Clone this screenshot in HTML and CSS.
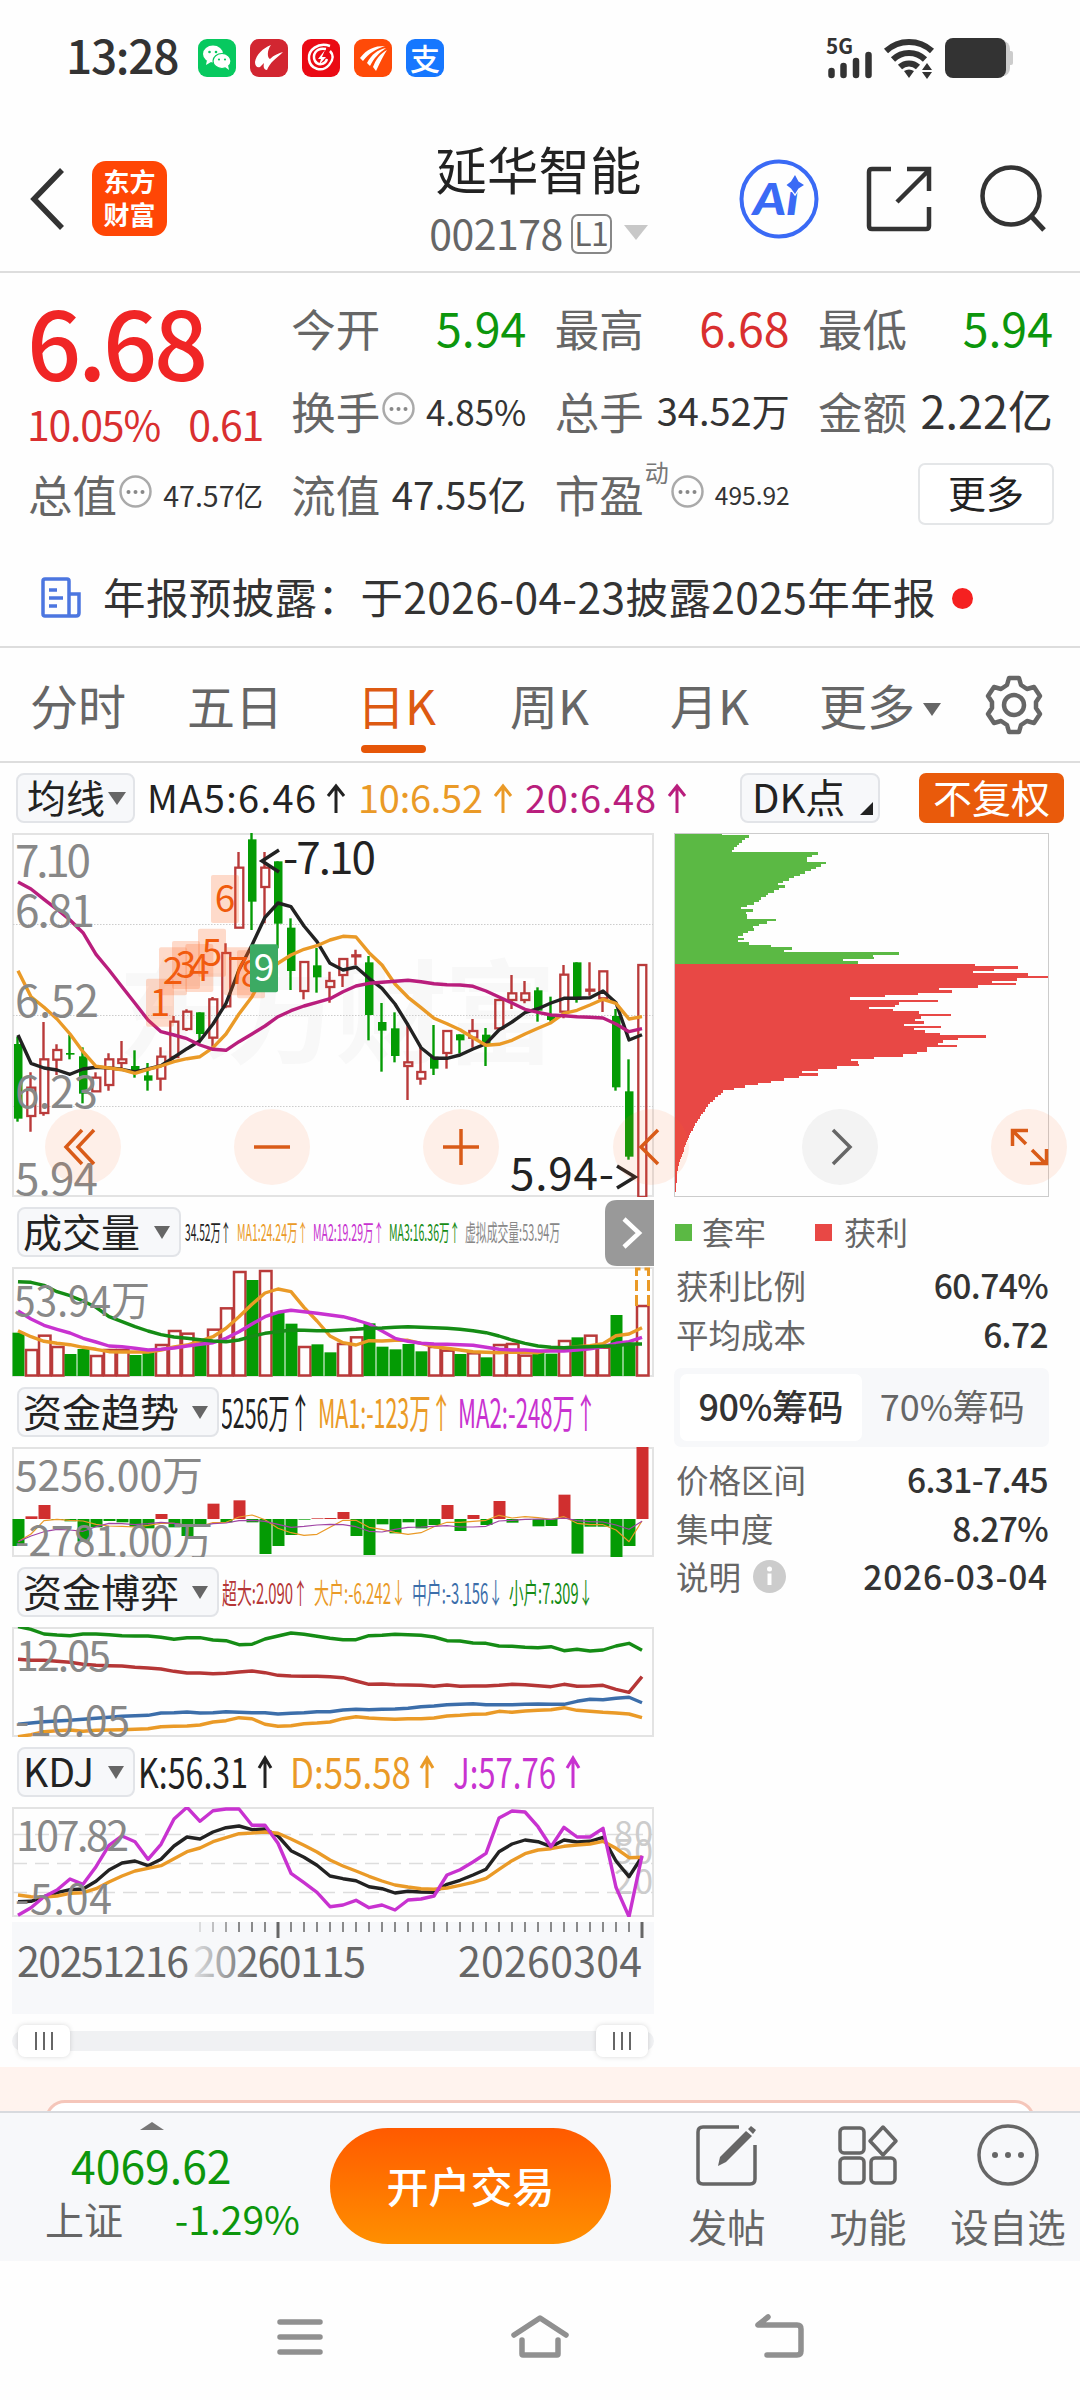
FILE: index.html
```html
<!DOCTYPE html>
<html lang="zh-CN">
<head>
    <meta charset="UTF-8">
    <meta name="viewport" content="width=device-width, initial-scale=1.0">
    <title>延华智能 002178</title>
    <link rel="stylesheet" href="styles.css">
</head>
<body>
    <svg class="defs" width="0" height="0">
        <symbol id="dots" viewBox="0 0 33 33"><circle cx="16.500" cy="16.500" r="15" fill="none" stroke="#aaa" stroke-width="2.500"/><g fill="#888"><circle cx="9.500" cy="17" r="2"/><circle cx="16.500" cy="17" r="2"/><circle cx="23.500" cy="17" r="2"/></g></symbol>
    </svg>

    <!-- Status bar -->
    <div class="status-bar">
        <span class="time">13:28</span>
        <div class="app-icons">
            <svg class="app-icon wechat" viewBox="0 0 38 38"><ellipse cx="15" cy="15" rx="10" ry="8.5" fill="#fff"/><path d="M9 21l-1 5 5-3z" fill="#fff"/><ellipse cx="24" cy="22" rx="9" ry="7.5" fill="#fff" stroke="#07c95f" stroke-width="1.2"/><path d="M27 28l4 3-1-5z" fill="#fff"/><g fill="#07c95f"><circle cx="11.5" cy="13" r="1.3"/><circle cx="18" cy="13" r="1.3"/><circle cx="21" cy="20.5" r="1.1"/><circle cx="27" cy="20.5" r="1.1"/></g></svg>
            <svg class="app-icon crimson" viewBox="0 0 38 38"><path d="M21 6C13 9 6 16 5 23C5 27 7 29 10 28L14 24C13 28 14 31 17 31C20 23 27 19 33 13C29 14 24 16 20 20C17 19 17 11 21 6Z" fill="#fff"/></svg>
            <svg class="app-icon red" viewBox="0 0 38 38"><g fill="none" stroke="#fff" stroke-width="2.500"><path d="M28 7C16 3 6 11 7 20C8 30 20 34 27 26C32 20 31 15 28 12"/><path d="M24 10C14 8 10 16 13 22C16 27 23 26 25 20"/></g><path d="M23 11L16 20L19 20L17 26L24 18L20 18Z" fill="#fff"/></svg>
            <svg class="app-icon orange" viewBox="0 0 38 38"><g fill="#fff"><path d="M6 19C13 10 20 7 31 7C22 10 15 14 9 22Z"/><path d="M13 24C18 15 23 11 32 9C25 14 20 19 16 27Z"/><path d="M19 28C22 20 26 15 33 11C29 17 27 22 22 32Z"/></g></svg>
            <span class="app-icon blue">支</span>
        </div>
        <svg class="sys-icons" viewBox="826 34 190 46">
            <text x="826" y="53" class="net" textLength="27" lengthAdjust="spacingAndGlyphs">5G</text>
            <g stroke="#333" stroke-width="6.5" stroke-linecap="round"><path d="M831.500 70V74M843.500 65V74M856 60V74M868.500 54V74"/></g>
            <g fill="none" stroke="#333" stroke-width="6"><path d="M886 50A34 34 0 0 1 932 50"/><path d="M893 58.500A23 23 0 0 1 925 58.500"/><path d="M900 66A13 13 0 0 1 918 66"/></g>
            <path d="M904 70L909 77L914 70Q909 67 904 70ZM922 69L927 62L932 69ZM922 71L927 78L932 71Z" fill="#333"/>
            <rect x="996" y="40" width="14" height="35" rx="8" fill="#ccc"/><rect x="1006" y="50" width="7" height="14" rx="2" fill="#ccc"/>
            <rect x="945" y="37" width="61" height="40" rx="8" fill="#333"/>
        </svg>
    </div>

    <!-- Header -->
    <div class="header">
        <div class="header-left">
            <svg width="36" height="64" viewBox="0 0 36 64"><path d="M32 3L4 32L32 61" fill="none" stroke="#333" stroke-width="5.500"/></svg>
            <div class="logo">东方<br>财富</div>
        </div>
        <div class="stock">
            <div class="stock-name">延华智能</div>
            <div class="stock-code">002178<span class="level">L1</span><i class="tri"></i></div>
        </div>
        <div class="header-right">
            <svg width="80" height="80" viewBox="0 0 80 80"><circle cx="40" cy="40" r="37.500" fill="none" stroke="#3a6af5" stroke-width="4"/><text x="14" y="56" class="ai" textLength="46" lengthAdjust="spacingAndGlyphs">Ai</text><path d="M56 16L59.500 22.500L65 26L59.500 29.500L56 35L52 29.500L47.500 26L52 22.500Z" fill="#3a6af5" stroke="#fff" stroke-width="2.500" paint-order="stroke"/></svg>
            <svg width="68" height="68" viewBox="0 0 68 68"><path d="M26 4H7Q4 4 4 7V61Q4 64 7 64H61Q64 64 64 61V42M32 37L64 5M42 4H64V26" fill="none" stroke="#333" stroke-width="4.500"/></svg>
            <svg width="68" height="68" viewBox="0 0 68 68"><circle cx="32" cy="31" r="28.500" fill="none" stroke="#333" stroke-width="4.500"/><path d="M52 51L65 65" stroke="#333" stroke-width="5"/></svg>
        </div>
    </div>

    <!-- Quote -->
    <div class="quote">
        <div class="price-box">
            <div class="price">6.68</div>
            <div class="change"><span>10.05%</span><span>0.61</span></div>
        </div>
        <div class="cell"><span class="label">今开</span><span class="value v46 green">5.94</span></div>
        <div class="cell"><span class="label">最高</span><span class="value v46 rise">6.68</span></div>
        <div class="cell"><span class="label">最低</span><span class="value v46 green">5.94</span></div>
        <div class="cell"><span class="label">换手</span><svg class="dots"><use href="#dots"/></svg><span class="value v35">4.85%</span></div>
        <div class="cell"><span class="label">总手</span><span class="value v38">34.52万</span></div>
        <div class="cell"><span class="label">金额</span><span class="value v45">2.22亿</span></div>
        <div class="cell"><span class="label">总值</span><svg class="dots"><use href="#dots"/></svg><span class="value v28">47.57亿</span></div>
        <div class="cell"><span class="label">流值</span><span class="value v39">47.55亿</span></div>
        <div class="cell"><span class="label">市盈</span><span class="dyn">动</span><svg class="dots"><use href="#dots"/></svg><span class="value v24">495.92</span></div>
        <div class="cell"><button class="more-btn">更多</button></div>
    </div>

    <!-- Notice -->
    <div class="notice">
        <svg width="40" height="42" viewBox="0 0 40 42"><g fill="none" stroke="#4c76e0" stroke-width="3.500"><path d="M28 39H4Q2 39 2 37V4Q2 2 4 2H26Q28 2 28 4V39H35Q38 39 38 36V17H29"/><path d="M8 13H16M8 21H22M8 29H16"/></g></svg>
        <span class="notice-text">年报预披露：于2026-04-23披露2025年年报</span>
        <i class="red-dot"></i>
    </div>

    <!-- Period tabs -->
    <div class="tabs">
        <span class="tab">分时</span>
        <span class="tab">五日</span>
        <span class="tab active">日K</span>
        <span class="tab">周K</span>
        <span class="tab">月K</span>
        <span class="tab">更多<i class="tri dark small"></i></span>
        <svg class="gear" width="60" height="60" viewBox="0 0 60 60"><g fill="none" stroke="#666" stroke-width="4.500" stroke-linejoin="round"><path d="M25 3H35L37 10L43 14L50 12L56 21L52 27V33L56 39L50 48L43 46L37 50L35 57H25L23 50L17 46L10 48L4 39L8 33V27L4 21L10 12L17 14L23 10Z"/><circle cx="30" cy="30" r="10"/></g></svg>
    </div>

    <!-- Moving averages -->
    <div class="ma-row">
        <span class="select ma-select">均线<i class="tri dark small"></i></span>
        <svg class="ma-values" width="560" height="70" viewBox="141 763 560 70">
            <g class="t38">
                <text x="147" y="813" textLength="169" class="c-black">MA5:6.46</text><text x="358" y="813" textLength="125" class="c-orange">10:6.52</text><text x="525" y="813" textLength="131" class="c-magenta">20:6.48</text>
            </g>
            <g fill="none" stroke-width="3"><path d="M336 813V787M328 796L336 786L344 796" stroke="#222"/><path d="M503 813V787M495 796L503 786L511 796" stroke="#ea9a27"/><path d="M677 813V787M669 796L677 786L685 796" stroke="#b91e7d"/></g>
        </svg>
        <span class="select dk">DK点<i class="corner"></i></span>
        <span class="adjust">不复权</span>
    </div>

    <!-- Charts -->
    <div class="charts">
        <div class="left-col">
            <svg class="chart" width="642" height="364" viewBox="12 833 642 364">
                <text x="118" y="1055" class="watermark" textLength="438">东方财富</text>
                <rect x="13" y="834" width="640" height="362" class="frame"/>
                <path d="M13 924.500H653M13 1015.500H653M13 1106.500H653" class="dotted"/>
                <g id="candles"></g>
                <g id="maLines"></g>
                <g class="axis t44">
                    <text x="15" y="877" textLength="76">7.10</text><text x="15" y="927" textLength="80">6.81</text><text x="15" y="1017" textLength="84">6.52</text><text x="15" y="1108" textLength="83">6.23</text><text x="15" y="1195" textLength="83">5.94</text>
                </g>
                <g id="tags"></g>
                <g class="t44 c-black"><text x="283" y="874" textLength="93">-7.10</text><text x="510" y="1190" textLength="104">5.94-</text></g>
                <path d="M279 850L262 861L279 872M617 1166L635 1177L617 1188" fill="none" stroke="#222" stroke-width="3.500"/>
            </svg>

            <div class="ind-row">
                <span class="select ind w3">成交量<i class="tri dark"></i></span>
                <svg width="470" height="70" viewBox="184 1197 470 70">
                    <g class="t22">
                        <text x="185" y="1241" textLength="46" lengthAdjust="spacingAndGlyphs" class="c-black">34.52万↑</text>
                        <text x="237" y="1241" textLength="71" lengthAdjust="spacingAndGlyphs" class="c-orange">MA1:24.24万↑</text>
                        <text x="313" y="1241" textLength="71" lengthAdjust="spacingAndGlyphs" class="c-purple">MA2:19.29万↑</text>
                        <text x="389" y="1241" textLength="71" lengthAdjust="spacingAndGlyphs" class="c-green">MA3:16.36万↑</text>
                        <text x="465" y="1241" textLength="95" lengthAdjust="spacingAndGlyphs" class="c-grey">虚拟成交量:53.94万</text>
                    </g>
                    <path d="M654 1200H617Q605 1200 605 1212V1254Q605 1266 617 1266H654Z" fill="#999"/>
                    <path d="M624 1219L639 1233L624 1247" fill="none" stroke="#fff" stroke-width="4.500"/>
                </svg>
            </div>
            <svg class="chart" width="642" height="110" viewBox="12 1267 642 110">
                <rect x="13" y="1268" width="640" height="108" class="frame"/>
                <g id="volume"></g>
                <g class="axis"><text x="14" y="1316" textLength="136" class="t42" lengthAdjust="spacingAndGlyphs">53.94万</text></g>
            </svg>

            <div class="ind-row">
                <span class="select ind w4">资金趋势<i class="tri dark"></i></span>
                <svg width="430" height="70" viewBox="222 1377 430 70">
                    <g class="t40">
                        <text x="221" y="1428" textLength="90" lengthAdjust="spacingAndGlyphs" class="c-black">5256万↑</text>
                        <text x="318" y="1428" textLength="134" lengthAdjust="spacingAndGlyphs" class="c-orange">MA1:-123万↑</text>
                        <text x="458" y="1428" textLength="139" lengthAdjust="spacingAndGlyphs" class="c-purple">MA2:-248万↑</text>
                    </g>
                </svg>
            </div>
            <svg class="chart" width="642" height="110" viewBox="12 1447 642 110">
                <rect x="13" y="1448" width="640" height="108" class="frame"/>
                <g id="fund"></g>
                <g class="axis t42"><text x="15" y="1491" textLength="188">5256.00万</text><text x="15" y="1556" textLength="198">-2781.00万</text></g>
            </svg>

            <div class="ind-row">
                <span class="select ind w4">资金博弈<i class="tri dark"></i></span>
                <svg width="430" height="70" viewBox="222 1557 430 70">
                    <g class="t27">
                        <text x="222" y="1604" textLength="86" lengthAdjust="spacingAndGlyphs" class="c-red">超大:2.090↑</text>
                        <text x="314" y="1604" textLength="92" lengthAdjust="spacingAndGlyphs" class="c-orange">大户:-6.242↓</text>
                        <text x="412" y="1604" textLength="91" lengthAdjust="spacingAndGlyphs" class="c-blue">中户:-3.156↓</text>
                        <text x="509" y="1604" textLength="84" lengthAdjust="spacingAndGlyphs" class="c-green">小户:7.309↓</text>
                    </g>
                </svg>
            </div>
            <svg class="chart" width="642" height="110" viewBox="12 1627 642 110">
                <rect x="13" y="1628" width="640" height="108" class="frame"/>
                <g id="game"></g>
                <g class="axis t42"><text x="16" y="1671" textLength="95">12.05</text><text x="15" y="1736" textLength="115">-10.05</text></g>
            </svg>

            <div class="ind-row">
                <span class="select ind w2">KDJ<i class="tri dark"></i></span>
                <svg width="514" height="70" viewBox="138 1737 514 70">
                    <g class="t42">
                        <text x="138" y="1788" textLength="110" lengthAdjust="spacingAndGlyphs" class="c-black">K:56.31</text>
                        <text x="290" y="1788" textLength="121" lengthAdjust="spacingAndGlyphs" class="c-orange">D:55.58</text>
                        <text x="453" y="1788" textLength="103" lengthAdjust="spacingAndGlyphs" class="c-purple">J:57.76</text>
                    </g>
                    <g fill="none" stroke-width="3"><path d="M265 1788V1759M259 1768L265 1758L271 1768" stroke="#222"/><path d="M427 1788V1759M421 1768L427 1758L433 1768" stroke="#ea9a27"/><path d="M573 1788V1759M567 1768L573 1758L579 1768" stroke="#c832d0"/></g>
                </svg>
            </div>
            <svg class="chart" width="642" height="110" viewBox="12 1807 642 110">
                <rect x="13" y="1808" width="640" height="108" class="frame"/>
                <path d="M13 1834.500H653M13 1863.500H653M13 1892.500H653" class="dashed"/>
                <g class="level-label"><text x="614" y="1846" textLength="39">80</text><text x="614" y="1864" textLength="39">50</text><text x="614" y="1894" textLength="39">20</text></g>
                <g id="kdj"></g>
                <g class="axis t42"><text x="16" y="1851" textLength="113">107.82</text><text x="15" y="1914" textLength="97">-5.04</text></g>
            </svg>

            <!-- Time axis -->
            <svg class="time-axis" width="642" height="92" viewBox="12 1922 642 92">
                <defs><linearGradient id="fade"><stop offset="0" stop-color="#666" stop-opacity="0.150"/><stop offset="0.350" stop-color="#666"/></linearGradient></defs>
                <g id="ticks" stroke="#666"></g>
                <g class="t42" fill="#666">
                    <text x="17" y="1977" textLength="172">20251216</text><text x="193" y="1977" textLength="173" fill="url(#fade)">20260115</text><text x="458" y="1977" textLength="184">20260304</text>
                </g>
            </svg>
            <div class="slider">
                <span class="handle"><i></i><i></i><i></i></span>
                <span class="handle"><i></i><i></i><i></i></span>
            </div>
        </div>

        <!-- Chip distribution -->
        <div class="right-col">
            <svg class="chart" width="375" height="364" viewBox="674 833 375 364">
                <g id="chips"></g>
                <rect x="674.500" y="833.500" width="374" height="363" class="chip-frame"/>
            </svg>
            <div class="legend"><i class="sq sq-green"></i>套牢<i class="sq sq-red"></i>获利</div>
            <div class="info first"><span>获利比例</span><b>60.74%</b></div>
            <div class="info"><span>平均成本</span><b>6.72</b></div>
            <div class="toggle"><span class="on">90%筹码</span><span>70%筹码</span></div>
            <div class="info"><span>价格区间</span><b>6.31-7.45</b></div>
            <div class="info"><span>集中度</span><b>8.27%</b></div>
            <div class="info"><span>说明<svg class="info-icon" width="33" height="33" viewBox="0 0 33 33"><circle cx="16.500" cy="16.500" r="16.500" fill="#ccc"/><circle cx="16.500" cy="9" r="2.500" fill="#fff"/><path d="M16.500 13.500V25" stroke="#fff" stroke-width="4"/></svg></span><b class="date">2026-03-04</b></div>
        </div>

        <!-- Floating chart controls -->
        <div class="controls">
            <svg class="ctl" viewBox="0 0 76 76"><path d="M37 21L21 38L37 55M49 21L33 38L49 55"/></svg>
            <svg class="ctl" viewBox="0 0 76 76"><path d="M20 38H56"/></svg>
            <svg class="ctl" viewBox="0 0 76 76"><path d="M20 38H56M38 20V56"/></svg>
            <svg class="ctl" viewBox="0 0 76 76"><path d="M45 21L28 38L45 55"/></svg>
            <svg class="ctl grey" viewBox="0 0 76 76"><path d="M31 21L48 38L31 55"/></svg>
            <svg class="ctl" viewBox="0 0 76 76"><path d="M35 35L21 21M37 21.500H21.500V37M41 41L55 55M39 54.500H55.500V40"/></svg>
        </div>
    </div>

    <div class="promo"><div class="promo-card"></div></div>

    <!-- Bottom bar -->
    <div class="bottom-bar">
        <div class="index-box">
            <i class="tri up"></i>
            <div class="index-value">4069.62</div>
            <div class="index-row"><span>上证</span><span class="green">-1.29%</span></div>
        </div>
        <button class="trade-btn">开户交易</button>
        <div class="action">
            <svg width="64" height="64" viewBox="0 0 64 64"><g fill="none" stroke="#666" stroke-width="3.500"><path d="M44 4H8Q3 4 3 9V56Q3 61 8 61H55Q60 61 60 56V22"/></g><path d="M23 43L25 34L51 8L57 13L31 39ZM53 6L56 3L61 7L58 11Z" fill="#666"/></svg>
            <span>发帖</span>
        </div>
        <div class="action">
            <svg width="64" height="64" viewBox="0 0 64 64"><g fill="none" stroke="#666" stroke-width="3.500"><rect x="4" y="5" width="24" height="25" rx="4"/><rect x="4" y="35" width="24" height="25" rx="4"/><rect x="35" y="35" width="24" height="25" rx="4"/><path d="M47 4L60 18L47 32L34 18Z" stroke-linejoin="round"/></g></svg>
            <span>功能</span>
        </div>
        <div class="action wide">
            <svg width="64" height="64" viewBox="0 0 64 64"><circle cx="32" cy="32" r="29" fill="none" stroke="#666" stroke-width="3.500"/><g fill="#666"><circle cx="19" cy="32" r="3"/><circle cx="32" cy="32" r="3"/><circle cx="45" cy="32" r="3"/></g></svg>
            <span>设自选</span>
        </div>
    </div>

    <!-- System navigation -->
    <div class="sys-nav">
        <svg width="60" height="50" viewBox="0 0 60 50"><path d="M10 8H50M10 23H50M10 38H50" /></svg>
        <svg width="60" height="50" viewBox="0 0 60 50"><path d="M4 21L30 4L56 21M12 26V40Q12 41 13 41H47Q48 41 48 40V26"/></svg>
        <svg width="60" height="50" viewBox="0 0 60 50"><path d="M18 3L8 11H47Q51 11 51 15V37Q51 41 47 41H17"/></svg>
    </div>

    <script src="chart.js"></script>
</body>
</html>
```
FILE: styles.css
```css
* {
    margin: 0;
    padding: 0;
    box-sizing: border-box;
}

body {
    width: 1080px;
    height: 2400px;
    overflow: hidden;
    background: #fefefe;
    color: #333;
    font-family: "Noto Sans CJK SC", "Noto Sans", sans-serif;
}

svg {
    display: block;
    flex-shrink: 0;
}

svg text {
    font-family: "Noto Sans CJK SC", "Noto Sans", sans-serif;
}

i {
    font-style: normal;
}

.defs {
    position: absolute;
}

.green {
    color: #0c960c;
}

.rise {
    color: #d92f2f;
}

/* Status bar */
.status-bar {
    display: flex;
    align-items: center;
    height: 115px;
    padding: 0 64px 0 66px;
}

.time {
    font-size: 46px;
    font-weight: 500;
    line-height: 60px;
    width: 132px;
    letter-spacing: -1.3px;
    margin-top: -7px;
}

.app-icons {
    display: flex;
    gap: 14px;
}

.app-icon {
    width: 38px;
    height: 38px;
    border-radius: 9px;
}

.wechat { background: #07c95f; }
.crimson { background: #d22631; }
.red { background: #ea0a14; }
.orange { background: #ff4a08; }

.blue {
    background: #1677ff;
    color: white;
    font-size: 30px;
    font-weight: 500;
    line-height: 36px;
    text-align: center;
}

.sys-icons {
    width: 190px;
    height: 46px;
    margin-left: auto;
}

.net {
    font-size: 21px;
    font-weight: 700;
    fill: #333;
}

/* Header */
.header {
    display: grid;
    grid-template-columns: 1fr auto 1fr;
    align-items: center;
    height: 158px;
    padding: 11px 33px 0 30px;
    border-bottom: 2px solid #ddd;
}

.header-left {
    display: flex;
    align-items: center;
    gap: 26px;
}

.logo {
    width: 75px;
    height: 75px;
    border-radius: 14px;
    background: #ff4605;
    color: white;
    font-size: 26px;
    font-weight: 700;
    line-height: 33px;
    padding-top: 3px;
    text-align: center;
}

.stock {
    text-align: center;
    margin-top: 3px;
}

.stock-name {
    font-size: 51.5px;
    line-height: 64px;
    color: #222;
}

.stock-code {
    display: flex;
    align-items: center;
    justify-content: center;
    font-size: 41px;
    letter-spacing: -0.5px;
    line-height: 64px;
    color: #666;
}

.level {
    width: 41px;
    height: 40px;
    margin: 4px 12px 0 8px;
    border: 2px solid #888;
    border-radius: 7px;
    font-size: 32px;
    line-height: 33px;
}

.tri {
    display: inline-block;
    width: 0;
    height: 0;
    border: 12px solid transparent;
    border-top: 15px solid #c8c8c8;
    border-bottom: 0;
}

.tri.dark {
    border-width: 13px 8px 0;
    border-top-color: #666;
}

.tri.small {
    border-left-width: 9px;
    border-right-width: 9px;
}

.header-right {
    display: flex;
    align-items: center;
    justify-content: flex-end;
    gap: 46px;
}

.ai {
    font-family: "Lato", sans-serif;
    font-size: 43px;
    font-weight: 900;
    font-style: italic;
    fill: #3a6af5;
}

/* Quote */
.quote {
    display: grid;
    grid-template-columns: repeat(4, 235px);
    grid-template-rows: 83px 83px 83px;
    justify-content: space-between;
    align-items: center;
    height: 268px;
    padding: 15px 27px 0 28px;
}

.price-box {
    grid-row: span 2;
    align-self: start;
    margin-left: -1px;
    color: #d92f2f;
}

.price {
    font-size: 95px;
    font-weight: 500;
    letter-spacing: -3.2px;
    line-height: 104px;
    color: #f02525;
}

.change {
    display: flex;
    justify-content: space-between;
    margin-top: 6px;
    font-size: 41px;
    letter-spacing: -1.2px;
    line-height: 50px;
}

.cell {
    display: flex;
    align-items: center;
    height: 60px;
    white-space: nowrap;
}

.label {
    font-size: 44.5px;
    line-height: 60px;
    color: #666;
    margin-top: -4px;
}

.value {
    margin-left: auto;
    margin-top: -5px;
    line-height: 60px;
}

.v46 { font-size: 46.5px; }
.v45 { font-size: 45px; }
.v39 { font-size: 38.5px; }
.v38 { font-size: 38px; }
.v35 { font-size: 35px; margin-top: -3px; }
.v28 { font-size: 28.5px; margin-top: -1px; }
.v24 { font-size: 24.5px; margin-top: -1px; }

.dots {
    width: 33px;
    height: 33px;
    margin: -8px 0 0 2px;
}

.dyn {
    align-self: flex-start;
    font-size: 24px;
    line-height: 20px;
    margin: -4px 0 0 1px;
    color: #777;
}

.more-btn {
    width: 136px;
    height: 62px;
    margin: -3px -1px 0 auto;
    border: 2px solid #e4e6e8;
    border-radius: 7px;
    background: white;
    color: #222;
    font: inherit;
    font-size: 38px;
    line-height: 50px;
    padding-bottom: 4px;
}

/* Notice */
.notice {
    display: flex;
    align-items: center;
    height: 107px;
    padding: 9px 0 0 41px;
    border-bottom: 2px solid #ddd;
}

.notice-text {
    margin: -5px 0 0 22px;
    font-size: 42.5px;
    letter-spacing: 0.4px;
    line-height: 60px;
}

.red-dot {
    width: 21px;
    height: 21px;
    margin-left: 16px;
    border-radius: 50%;
    background: #f52020;
}

/* Tabs */
.tabs {
    display: grid;
    grid-template-columns: 157px 170px 153px 160px 149px 165px 60px;
    align-items: center;
    height: 115px;
    padding: 0 0 0 30px;
    border-bottom: 2px solid #ddd;
    font-size: 48px;
    color: #666;
}

.tab {
    position: relative;
    line-height: 113px;
    height: 113px;
    white-space: nowrap;
}

.tab .tri {
    margin: 0 0 9px 8px;
}

.tab.active {
    color: #dd5a12;
}

.tab.active::after {
    content: "";
    position: absolute;
    left: 4px;
    bottom: 8px;
    width: 65px;
    height: 8px;
    border-radius: 4px;
    background: #e65608;
}

/* Moving average row */
.ma-row {
    display: flex;
    align-items: center;
    height: 70px;
    padding: 0 16px;
}

.select {
    display: flex;
    align-items: center;
    justify-content: space-between;
    height: 50px;
    border: 2px solid #e2e4e8;
    border-radius: 8px;
    background: #f7f8fa;
    color: #222;
    font-size: 39px;
    line-height: 44px;
    padding: 0 9px 4px 4px;
}

.select .tri {
    margin-top: 5px;
}

.ma-select {
    width: 119px;
    padding-left: 9px;
    padding-right: 7px;
    font-size: 39px;
}

.ma-values {
    margin-left: 6px;
}

.dk {
    position: relative;
    width: 140px;
    margin-left: 39px;
    padding-left: 10px;
    font-size: 40px;
}

.corner {
    position: absolute;
    right: 5px;
    bottom: 6px;
    border-left: 13px solid transparent;
    border-bottom: 13px solid #222;
}

.adjust {
    width: 145px;
    height: 50px;
    margin-left: 39px;
    border-radius: 7px;
    background: #e95a0b;
    color: white;
    font-size: 39px;
    line-height: 46px;
    text-align: center;
}

/* Charts */
.charts {
    position: relative;
    display: flex;
    height: 1234px;
    padding-left: 12px;
}

.left-col {
    width: 642px;
}

.right-col {
    width: 375px;
    margin-left: 20px;
}

.frame {
    fill: none;
    stroke: #e3e3e3;
    stroke-width: 2;
}

.chip-frame {
    fill: none;
    stroke: #ccc;
}

.dotted {
    stroke: #ccc;
    stroke-dasharray: 1.5 1.5;
}

.dashed {
    stroke: #ddd;
    stroke-width: 1.5;
    stroke-dasharray: 14 8;
}

.watermark {
    font-size: 112px;
    font-weight: 700;
    fill: #f8f8f8;
}

.axis {
    fill: #888;
}

.level-label {
    fill: #ccc;
    font-size: 34px;
}

.t44 { font-size: 44px; }
.t42 { font-size: 41px; }
.t40 { font-size: 40px; }
.t38 { font-size: 38px; }
.t27 { font-size: 28px; }
.t22 { font-size: 23px; }

.c-black { fill: #222; }
.c-orange { fill: #ea9a27; }
.c-magenta { fill: #b91e7d; }
.c-purple { fill: #c832d0; }
.c-green { fill: #158c15; }
.c-red { fill: #b53636; }
.c-blue { fill: #3c6eaa; }
.c-grey { fill: #888; }

.line {
    fill: none;
    stroke-width: 3.4;
    stroke-linejoin: round;
}

.line.thin {
    stroke-width: 1.2;
}

.tag {
    font-size: 37px;
    text-anchor: middle;
}

.ind-row {
    display: flex;
    align-items: center;
    height: 70px;
    padding-left: 5px;
}

.ind-row svg {
    margin-left: 3px;
}

.w2 { width: 118px; }
.w3 { width: 164px; }
.w4 { width: 202px; }

.time-axis {
    margin-top: 5px;
    background: #f7f8fa;
}

.slider {
    display: flex;
    justify-content: space-between;
    align-items: center;
    height: 20px;
    margin-top: 17px;
    padding: 0 6px;
    border-radius: 10px;
    background: #f0f1f3;
}

.handle {
    display: flex;
    justify-content: center;
    align-items: center;
    gap: 6px;
    width: 52px;
    height: 32px;
    border-radius: 7px;
    background: white;
    box-shadow: 0 0 5px rgba(0,0,0,0.15);
}

.handle i {
    width: 2px;
    height: 18px;
    background: #666;
}

/* Chip info */
.legend {
    display: flex;
    align-items: center;
    height: 67px;
    font-size: 32px;
    color: #666;
}

.sq {
    width: 17px;
    height: 17px;
    margin: 3px 10px 0 1px;
}

.sq-green {
    background: #5bb944;
}

.sq-red {
    background: #e84845;
    margin-left: 49px;
    margin-right: 12px;
}

.info {
    display: flex;
    align-items: center;
    justify-content: space-between;
    height: 48.5px;
    padding: 0 1px 0 2px;
    font-size: 32.5px;
    line-height: 48px;
    color: #666;
}

.info.first {
    margin-top: -3px;
}

.info span {
    display: flex;
    align-items: center;
}

.info b {
    font-size: 33.5px;
    font-weight: 500;
    letter-spacing: -0.6px;
    color: #333;
}

.info .date {
    letter-spacing: 0.8px;
}

.info-icon {
    margin-left: 12px;
}

.toggle {
    display: flex;
    height: 79px;
    margin: 10px 0 8px;
    padding: 6px;
    border-radius: 7px;
    background: #f7f8fa;
    font-size: 36px;
    line-height: 62px;
    color: #666;
}

.toggle span {
    flex: 1;
    text-align: center;
    white-space: nowrap;
}

.toggle .on {
    border-radius: 7px;
    background: white;
    color: #333;
    font-weight: 500;
    letter-spacing: -0.5px;
}

/* Controls float over both charts */
.controls {
    position: absolute;
    left: 45px;
    top: 276px;
    width: 1022px;
    display: flex;
    justify-content: space-between;
}

.ctl {
    width: 76px;
    height: 76px;
    border-radius: 50%;
    background: rgba(255,110,40,0.1);
    fill: none;
    stroke: #d95b18;
    stroke-width: 3.5;
}

.ctl.grey {
    background: #f3f3f3;
    stroke: #666;
}

/* Promo */
.promo {
    height: 44px;
    overflow: hidden;
    background: #fff3ee;
    padding: 33px 45px 0;
}

.promo-card {
    height: 60px;
    border: 3px solid #f5c6ba;
    border-radius: 20px;
    background: white;
}

/* Bottom bar */
.bottom-bar {
    display: flex;
    height: 150px;
    border-top: 2px solid #d8dade;
    background: #f7f8fa;
    color: #666;
    font-size: 39px;
}

.index-box {
    width: 330px;
    padding: 9px 30px 0 45px;
    display: flex;
    flex-direction: column;
}

.tri.up {
    border: 12px solid transparent;
    border-bottom: 8px solid #777;
    border-top: 0;
    margin-left: 95px;
}

.index-value {
    margin: 8px 0 0 26px;
    font-size: 44.5px;
    line-height: 54px;
    color: #0c960c;
}

.index-row {
    display: flex;
    justify-content: space-between;
    line-height: 52px;
}

.trade-btn {
    width: 281px;
    height: 116px;
    margin: 15px 70px 0 0;
    padding-bottom: 3px;
    border: none;
    border-radius: 58px;
    background: linear-gradient(#ff5a00, #ff8f00);
    color: white;
    font: inherit;
    font-size: 42px;
    font-weight: 500;
}

.action {
    display: flex;
    flex-direction: column;
    align-items: center;
    width: 92px;
    padding-top: 10px;
    margin-right: 49px;
    line-height: 50px;
}

.action span {
    margin-top: 13px;
    white-space: nowrap;
    font-size: 38.5px;
}

.action.wide {
    width: 120px;
    margin: 0 0 0 -15px;
}

/* System navigation */
.sys-nav {
    display: flex;
    justify-content: space-between;
    height: 139px;
    padding: 53px 270px 0;
}

.sys-nav svg {
    fill: none;
    stroke: #909090;
    stroke-width: 5.5;
    stroke-linecap: round;
    stroke-linejoin: round;
}
```
FILE: chart.js
```js
const START_X = 18;
const STEP = 13;
const RED = '#b93a3a';
const GREEN = '#049b04';

// [direction, body top, body bottom, high, low] in thirds of a pixel below y=820
const candles = [
    ['g',672,896,650,905], ['r',803,888,757,935], ['r',718,879,606,887], ['r',690,719,673,765],
    ['g',699,704,645,718], ['g',709,821,682,850], ['r',773,814,757,814], ['r',718,795,700,812],
    ['r',718,729,663,745], ['g',738,755,691,773], ['g',766,782,729,812], ['r',710,776,682,812],
    ['r',605,711,588,711], ['r',575,627,568,633], ['g',577,642,577,670], ['r',538,653,531,680],
    ['r',399,559,370,565], ['r',143,323,96,323], ['g',58,245,39,330], ['r',143,201,96,310],
    ['g',124,311,124,385], ['g',323,453,295,510], ['r',426,513,426,538], ['g',436,472,384,518],
    ['r',483,501,455,548], ['r',417,465,417,501], ['r',406,409,389,435], ['g',427,585,408,661],
    ['g',606,632,549,755], ['g',625,708,577,727], ['r',727,738,610,840], ['r',756,776,682,794],
    ['g',710,746,615,765], ['r',633,699,633,746], ['g',643,661,643,700], ['r',633,653,597,683],
    ['g',644,672,624,738], ['r',540,625,540,625], ['r',520,540,465,567], ['r',520,540,483,550],
    ['g',511,572,502,605], ['g',585,600,530,605], ['r',464,575,435,595], ['g',427,540,427,548],
    ['r',509,512,427,527], ['r',454,535,454,576], ['g',588,802,567,812], ['g',814,1010,718,1019],
    ['r',435,1131,435,1131]
];

const ma5 = [645,730,744,750,763,747,742,744,748,756,747,737,712,686,662,612,550,450,375,292,249,260,318,365,430,450,441,475,505,552,615,683,715,715,705,687,671,630,606,578,566,549,535,535,533,513,548,660,644];
const ma10 = [452,530,562,597,642,695,739,744,749,760,748,738,725,716,710,683,642,582,530,460,430,405,388,377,360,349,351,398,435,492,532,563,595,611,629,653,676,673,661,642,625,608,580,571,555,538,550,597,590];
const ma20 = [186,207,238,268,300,338,403,450,500,550,600,635,645,656,675,688,691,665,642,618,590,572,558,547,536,515,498,490,487,484,481,485,491,494,495,499,513,531,549,568,577,585,587,590,592,594,612,635,626];

const vol = 'g398 r450 r407 r441 g462 g447 r468 r450 r450 g465 g455 r435 r393 r401 g420 r389 r325 r216 g240 r213 g338 g371 r441 g433 g457 r432 r412 g370 g440 g448 g432 g454 r441 r452 g462 r460 g472 r435 r432 r467 g458 g461 r423 g412 r407 r443 g345 g430 r318'.split(' ');
const vol1 = [392,410,424,430,434,442,448,455,456,456,456,450,441,435,423,410,385,350,313,279,267,275,322,363,408,428,435,422,423,421,421,430,440,445,450,455,457,458,456,457,458,450,445,440,437,431,407,402,383];
const vol2 = [333,357,376,388,399,415,426,438,440,445,450,448,444,438,433,428,415,395,372,350,337,331,335,340,345,350,360,372,393,415,424,430,432,433,434,436,442,448,450,450,453,453,453,450,446,440,430,425,412];
const vol3 = [245,247,256,275,287,303,322,350,365,380,393,404,411,415,419,423,425,420,409,400,395,390,391,392,392,390,388,385,384,382,380,382,383,385,388,392,398,408,420,430,438,442,443,441,440,439,437,432,432];

const fund = 'g468 r379 r345 g390 g394 g455 g412 g393 g397 g410 g415 r372 g412 g438 g408 r341 g397 r331 g397 g492 g468 g435 g389 r385 r384 r366 g438 g495 g403 g430 g397 g415 g405 r345 g423 r375 g405 r333 g398 g389 g409 g408 r314 g491 g410 g410 g501 g468 r171'.split(' ');
const fund1 = [455,432,392,388,391,393,403,408,409,411,406,400,400,407,409,398,397,381,375,389,415,428,436,433,412,391,391,412,418,427,433,428,410,397,397,394,391,376,384,380,383,388,380,400,404,404,420,455,393];
const fund2 = [455,438,425,418,420,424,410,400,401,404,401,397,400,405,409,401,399,392,391,394,403,412,409,405,403,404,410,424,426,418,412,411,409,407,411,411,409,393,391,388,387,388,384,392,395,396,405,418,394];

const small = [200,208,222,225,227,222,222,224,227,228,228,232,238,233,233,240,242,254,253,237,228,219,223,229,235,239,239,227,226,223,224,226,231,242,243,249,250,258,259,262,263,260,272,268,273,270,258,250,271];
const huge = [298,301,301,304,307,313,316,317,318,322,324,327,334,339,339,341,340,336,333,338,346,348,349,349,350,353,363,373,372,374,375,376,379,375,379,378,378,376,373,374,377,380,373,379,378,376,388,397,350];
const middle = [493,489,485,483,481,478,475,472,469,467,466,459,458,456,459,458,455,457,458,458,462,460,458,455,455,450,448,449,448,447,445,440,438,434,433,431,434,434,434,433,432,433,433,424,418,419,415,412,428];
const big = [530,524,515,512,510,514,511,510,509,508,506,500,499,498,495,486,482,473,476,493,499,497,491,489,486,476,470,474,476,478,476,476,474,468,466,463,462,454,457,453,451,449,443,451,454,457,459,462,473];

const kLine = [455,454,440,428,419,417,394,360,339,333,347,328,288,261,267,246,233,228,239,237,258,302,322,346,378,386,392,410,416,429,424,426,427,403,391,375,358,305,282,270,275,290,270,276,274,262,333,380,320];
const dLine = [435,440,441,438,430,428,416,396,378,363,355,347,326,305,294,275,263,251,249,246,250,267,286,306,330,348,363,379,393,405,411,416,418,414,406,397,385,358,332,311,300,296,289,285,282,274,295,323,322];
const jLine = [496,473,440,420,387,403,350,286,258,275,328,283,207,172,214,182,177,177,226,226,280,370,398,427,470,465,451,473,465,480,450,447,438,375,359,336,310,204,183,186,230,290,232,261,261,235,412,500,317];

const chipsLocked = [187,267,255,246,238,230,222,215,474,457,440,440,499,484,468,452,436,420,402,386,369,353,375,358,342,323,317,302,298,282,262,244,278,258,260,260,347,322,296,280,281,263,248,235,251,235,267,333,397,372,716,640,641,548,594];
const chipsProfit = [946,1073,1002,939,1105,1164,1071,996,1068,953,838,877,773,675,571,833,718,706,627,698,776,872,783,766,792,731,842,763,795,840,977,893,848,835,891,802,800,770,730,643,573,594,596,530,473,426,473,418,373,333,294,256,221,188,182,174,166,158,151,145,139,134,129,124,119,114,110,106,102,98,94,91,88,85,82,79,76,73,71,68,66,63,60,58,56,54,53,52,51,51,50,50,49,48,48,47,46,45];

function x(i) {
    return START_X + i * STEP;
}

function line(values, base, color, cls = '') {
    const pts = values.map((v, i) => `${x(i)},${(base + v / 3).toFixed(1)}`).join(' ');
    return `<polyline class="line ${cls}" stroke="${color}" points="${pts}"/>`;
}

function put(id, html) {
    document.getElementById(id).innerHTML = html;
}

// Candlesticks
put('candles', candles.map(([dir, top, bottom, high, low], i) => {
    const y1 = 820 + top / 3, y2 = 820 + bottom / 3;
    const hi = 820 + high / 3, lo = 820 + low / 3;
    if (dir === 'g') {
        return `<path d="M${x(i) - 0.5} ${hi}V${lo}" stroke="${GREEN}" stroke-width="2.400"/><rect x="${x(i) - 4}" y="${y1}" width="8.500" height="${y2 - y1}" fill="${GREEN}"/>`;
    }
    return `<path d="M${x(i) - 0.5} ${hi}V${y1}M${x(i) - 0.5} ${y2}V${lo}" stroke="${RED}" stroke-width="2.400"/><rect x="${x(i) - 3.7}" y="${y1}" width="8" height="${y2 - y1}" fill="none" stroke="${RED}" stroke-width="2.300"/>`;
}).join(''));

put('maLines', line(ma5, 820, '#222') + line(ma10, 820, '#ea9a27') + line(ma20, 820, '#b91e7d'));

// Nine-turn sequence marks
const tags = [[438,476],[477,382],[516,363],[556,372],[594,326],[633,165],[672,382],[711,391],[750,373]];
put('tags', tags.map(([tx, ty], i) => {
    const last = i === 8;
    return `<rect x="${tx / 3}" y="${820 + ty / 3}" width="28" height="48" rx="2" fill="${last ? '#3caa63' : 'rgba(255,100,30,0.23)'}"/>` +
        `<text class="tag" x="${tx / 3 + 14}" y="${857 + ty / 3}" fill="${last ? '#fff' : '#f05a0c'}">${i + 1}</text>`;
}).join(''));

// Volume
put('volume', vol.map((v, i) => {
    const y = 1200 + v.slice(1) / 3;
    if (v[0] === 'g') {
        return `<rect x="${x(i) - 5.5}" y="${y}" width="12" height="${1376 - y}" fill="${GREEN}"/>`;
    }
    return `<rect x="${x(i) - 5}" y="${y}" width="11.500" height="${1375.5 - y}" fill="#fefefe" stroke="${RED}" stroke-width="2.500"/>`;
}).join('') +
    '<path d="M636.500 1306V1269H648.500V1306" fill="none" stroke="#ea9a27" stroke-width="3" stroke-dasharray="11 4"/>' +
    line(vol1, 1200, '#ea9a27') + line(vol2, 1200, '#c832d0') + line(vol3, 1200, '#158c15'));

// Fund flow
put('fund', fund.map((v, i) => {
    const y = 1390 + v.slice(1) / 3;
    const up = v[0] === 'r';
    return `<rect x="${x(i) - 5.5}" y="${up ? y : 1519}" width="12" height="${Math.abs(y - 1519)}" fill="${up ? '#d02f2f' : GREEN}"/>`;
}).join('') + line(fund1, 1390, '#ea9a27', 'thin') + line(fund2, 1390, '#a045a5', 'thin'));

put('game', line(small, 1560, '#158c15') + line(huge, 1560, '#b53636') + line(middle, 1560, '#3c6eaa') + line(big, 1560, '#ea9a27'));
put('kdj', line(kLine, 1750, '#222') + line(dLine, 1750, '#ea9a27') + line(jLine, 1750, '#c832d0'));

// Time axis ticks
let ticks = '';
for (let i = 14; i <= 48; i++) {
    const major = i === 20 || i === 48;
    ticks += `<path d="M${x(i)} 1922V${major ? 1938 : 1932}" stroke-width="${major ? 3 : 1.5}" opacity="${Math.min(1, (i - 13) * 0.25)}"/>`;
}
put('ticks', ticks);

// Chip distribution, one horizontal bar per price level
put('chips', chipsLocked.concat(chipsProfit).map((w, i) => {
    const color = i < chipsLocked.length ? '#5bb944' : '#e84845';
    return `<rect x="674.300" y="${833 + i * 2.379}" width="${(w - 43) / 3}" height="2.600" fill="${color}" shape-rendering="crispEdges"/>`;
}).join(''));
```
